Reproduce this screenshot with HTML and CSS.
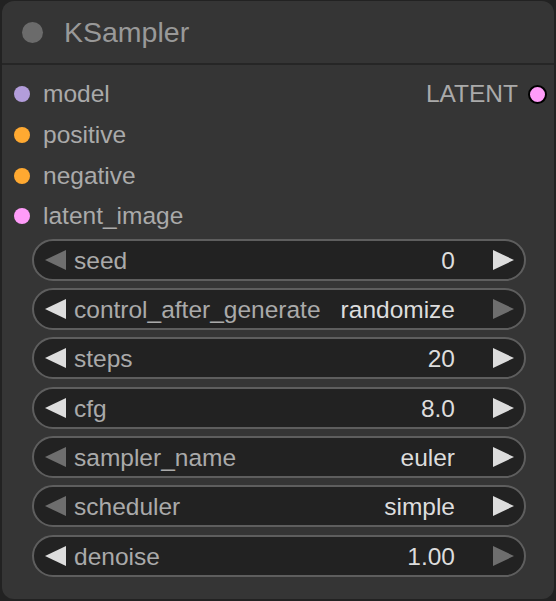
FILE: index.html
```html
<!DOCTYPE html>
<html>
<head>
<meta charset="utf-8">
<link rel="stylesheet" href="styles.css">
</head>
<body>
<div class="node">
  <div class="header">
    <span class="hdot"></span>
    <span class="title">KSampler</span>
  </div>
  <div class="slots">
    <div class="row">
      <div class="in"><span class="dot c-model"></span><span>model</span></div>
      <div class="out"><span>LATENT</span><span class="dot c-latent odot"></span></div>
    </div>
    <div class="row"><div class="in"><span class="dot c-cond"></span><span>positive</span></div></div>
    <div class="row"><div class="in"><span class="dot c-cond"></span><span>negative</span></div></div>
    <div class="row"><div class="in"><span class="dot c-latent"></span><span>latent_image</span></div></div>
  </div>
  <div class="widgets">
    <div class="widget">
      <svg class="arr dim" viewBox="0 0 21 20"><polygon points="21,0 21,20 0,10"/></svg>
      <span class="label">seed</span><span class="value">0</span>
      <svg class="arr" viewBox="0 0 21 20"><polygon points="0,0 0,20 21,10"/></svg>
    </div>
    <div class="widget">
      <svg class="arr" viewBox="0 0 21 20"><polygon points="21,0 21,20 0,10"/></svg>
      <span class="label">control_after_generate</span><span class="value">randomize</span>
      <svg class="arr dim" viewBox="0 0 21 20"><polygon points="0,0 0,20 21,10"/></svg>
    </div>
    <div class="widget">
      <svg class="arr" viewBox="0 0 21 20"><polygon points="21,0 21,20 0,10"/></svg>
      <span class="label">steps</span><span class="value">20</span>
      <svg class="arr" viewBox="0 0 21 20"><polygon points="0,0 0,20 21,10"/></svg>
    </div>
    <div class="widget">
      <svg class="arr" viewBox="0 0 21 20"><polygon points="21,0 21,20 0,10"/></svg>
      <span class="label">cfg</span><span class="value">8.0</span>
      <svg class="arr" viewBox="0 0 21 20"><polygon points="0,0 0,20 21,10"/></svg>
    </div>
    <div class="widget">
      <svg class="arr dim" viewBox="0 0 21 20"><polygon points="21,0 21,20 0,10"/></svg>
      <span class="label">sampler_name</span><span class="value">euler</span>
      <svg class="arr" viewBox="0 0 21 20"><polygon points="0,0 0,20 21,10"/></svg>
    </div>
    <div class="widget">
      <svg class="arr dim" viewBox="0 0 21 20"><polygon points="21,0 21,20 0,10"/></svg>
      <span class="label">scheduler</span><span class="value">simple</span>
      <svg class="arr" viewBox="0 0 21 20"><polygon points="0,0 0,20 21,10"/></svg>
    </div>
    <div class="widget">
      <svg class="arr" viewBox="0 0 21 20"><polygon points="21,0 21,20 0,10"/></svg>
      <span class="label">denoise</span><span class="value">1.00</span>
      <svg class="arr dim" viewBox="0 0 21 20"><polygon points="0,0 0,20 21,10"/></svg>
    </div>
  </div>
</div>
</body>
</html>
```
FILE: styles.css
```css
html, body {
  margin: 0;
  padding: 0;
  background: #222222;
  width: 556px;
  height: 601px;
  overflow: hidden;
  font-family: "Liberation Sans", Arial, sans-serif;
}

.node {
  margin: 1px 0 0 2px;
  width: 552px;
  height: 598px;
  box-sizing: border-box;
  background: #353535;
  border-radius: 12px;
  overflow: hidden;
}

.header {
  height: 62px;
  border-bottom: 2px solid #262626;
  display: flex;
  align-items: center;
  padding-left: 20px;
  box-sizing: content-box;
}

.hdot {
  width: 21px;
  height: 21px;
  border-radius: 50%;
  background: #6b6b6b;
  margin-right: 21px;
  margin-top: 1px;
}

.title {
  color: #999999;
  font-size: 28.5px;
  margin-top: 1px;
}

.slots {
  padding-top: 9px;
}

.row {
  height: 40.7px;
  display: flex;
  align-items: center;
  justify-content: space-between;
  font-size: 24.5px;
  color: #aaaaaa;
}

.in, .out {
  display: flex;
  align-items: center;
}

.in {
  padding-left: 12px;
}

.out {
  padding-right: 7px;
}

.dot {
  width: 16px;
  height: 16px;
  border-radius: 50%;
  box-sizing: border-box;
}

.in .dot {
  margin-right: 13px;
}

.odot {
  margin-left: 10px;
  border: 2px solid #000;
  width: 19px;
  height: 19px;
}

.c-model { background: #b39ddb; }
.c-cond { background: #ffa931; }
.c-latent { background: #ff9cf9; }

.widgets {
  padding: 2px 28px 0 30px;
  display: flex;
  flex-direction: column;
  gap: 7.3px;
}

.widget {
  height: 42px;
  box-sizing: border-box;
  border: 2px solid #5e5e5e;
  border-radius: 21px;
  background: #222222;
  display: flex;
  align-items: center;
  padding: 0 10px 0 11px;
  font-size: 24.5px;
}

.arr {
  width: 21px;
  height: 20px;
  flex: none;
  fill: #dddddd;
}

.arr.dim {
  fill: #6e6e6e;
}

.label {
  color: #aaaaaa;
  margin-left: 8px;
  flex: 1;
  white-space: nowrap;
  padding-top: 2px;
}

.value {
  color: #dddddd;
  margin-right: 38px;
  white-space: nowrap;
  padding-top: 2px;
}
```
